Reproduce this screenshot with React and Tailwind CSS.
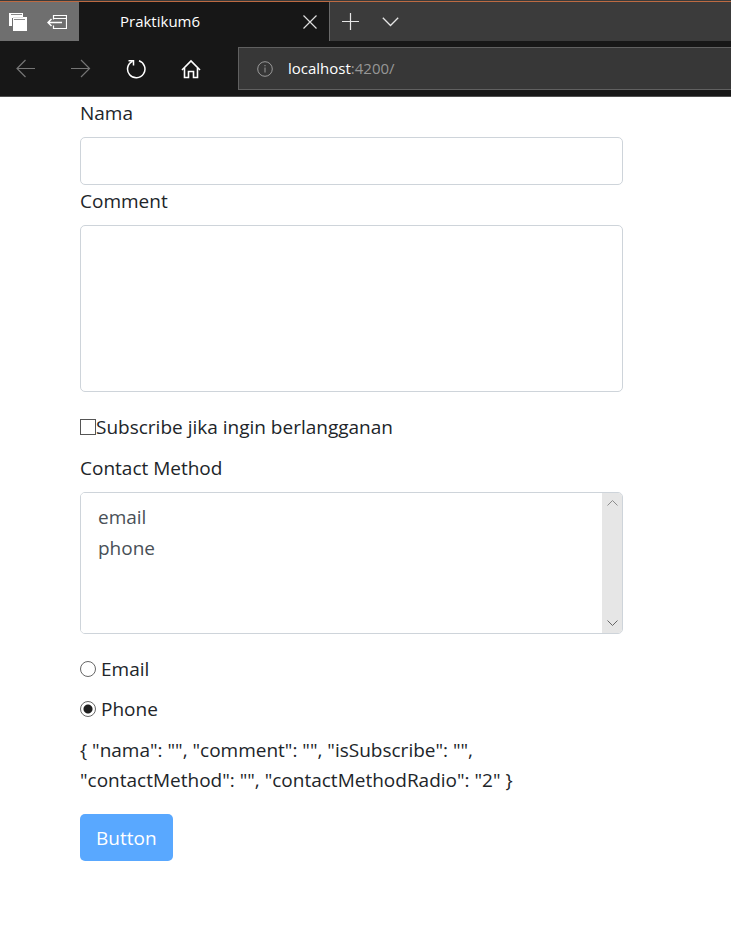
import { useState } from "react";

function TabBar() {
  return (
    <div className="flex h-[41px] border-t border-[#3b3b3b] bg-[#3b3b3b]">
      <div className="flex flex-1 border-t border-[#bd6a42]">
        <div className="flex w-[79px] bg-[#6f6f6f] text-white">
          <button type="button" aria-label="Tabs you've set aside" className="flex w-9 items-center justify-center">
            <svg width="18" height="18" viewBox="0 0 18 18" shapeRendering="crispEdges">
              <path d="M0 0h14v13H0z" fill="#fff" />
              <path d="M2 1h11v1H2z" fill="#8a8a8a" />
              <path d="M4 4h14v14H4z" fill="#fff" />
              <path d="M4 4h10v1H4z" fill="#e4e4e4" />
              <path d="M14 0h1v4h-1zM3 5h1v8H3z" fill="#6f6f6f" />
              <path d="M5 6h11v1H5z" fill="#8a8a8a" />
            </svg>
          </button>
          <button type="button" aria-label="Set these tabs aside" className="flex w-11 items-center justify-center">
            <svg width="20" height="14" viewBox="0 0 20 14" fill="none" stroke="#fff">
              <path d="M6.5 4.5v-4h13v13h-13v-3M6.5 3.5h13" strokeWidth="1.2" />
              <path d="M1 7.5h14M4.5 4 1 7.5 4.5 11" strokeWidth="1.5" />
            </svg>
          </button>
        </div>
        <div className="flex w-[251px] items-center justify-between border-r border-[#6a6a6a] bg-[#171717] pr-3 pl-[41px] text-[15px] text-white">
          <span>Praktikum6</span>
          <button type="button" aria-label="Close tab">
            <svg width="14" height="14" viewBox="0 0 14 14" fill="none" stroke="#dedede" strokeWidth="1.2">
              <path d="m.5.5 13 13M13.5.5l-13 13" />
            </svg>
          </button>
        </div>
        <button type="button" aria-label="New tab" className="flex w-10 items-center justify-center">
          <svg width="17" height="17" viewBox="0 0 17 17" fill="none" stroke="#e6e6e6" strokeWidth="1.2">
            <path d="M8.5 0v17M0 8.5h17" />
          </svg>
        </button>
        <button type="button" aria-label="Show tab previews" className="flex w-10 items-center justify-center">
          <svg width="17" height="10" viewBox="0 0 17 10" fill="none" stroke="#e6e6e6" strokeWidth="1.3">
            <path d="m.8.8 7.7 7.7L16.2.8" />
          </svg>
        </button>
      </div>
    </div>
  );
}

function Toolbar() {
  return (
    <div className="flex h-14 items-center border-b border-[#4f4f4f] bg-[#171717]">
      <nav className="flex w-[238px] pr-[18px]">
        <button type="button" aria-label="Back" className="flex w-[52px] justify-center">
          <svg width="20" height="20" viewBox="0 0 20 20" fill="none" stroke="#757575" strokeWidth="1.2">
            <path d="M19 9.5H1M9.5 1 1 9.5 9.5 18" />
          </svg>
        </button>
        <button type="button" aria-label="Forward" className="flex w-[58px] justify-center">
          <svg width="20" height="20" viewBox="0 0 20 20" fill="none" stroke="#757575" strokeWidth="1.2">
            <path d="M0 9.5h18.5M10 1l8.500 8.500L10 18" />
          </svg>
        </button>
        <button type="button" aria-label="Refresh" className="flex w-[52px] justify-center">
          <svg width="20" height="20" viewBox="0 0 20 20" fill="none" stroke="#fff" strokeWidth="1.5">
            <path d="M13 1.800A8.700 8.700 0 1 1 6.500 2.200" />
            <path d="M2.500 1.700h5v4.800" />
          </svg>
        </button>
        <button type="button" aria-label="Home" className="flex w-[58px] justify-center">
          <svg width="20" height="20" viewBox="0 0 20 20" fill="none" stroke="#fff" strokeWidth="1.6">
            <path d="m1 11 9-9 9 9" />
            <path d="M3.5 9v9.5h4v-6h5v6h4V9" />
          </svg>
        </button>
      </nav>
      <div className="flex h-[43px] flex-1 items-center border border-r-0 border-[#606060] bg-[#373737] pl-[18px] text-[15px]">
        <svg width="16" height="16" viewBox="0 0 16 16" fill="none" stroke="#9a9a9a">
          <circle cx="8" cy="8" r="7.3" />
          <path d="M8 6.5v5M8 4v1.3" />
        </svg>
        <span className="ml-[15px] text-[#969696]">
          <span className="text-white">localhost</span>:4200/
        </span>
      </div>
    </div>
  );
}

function Radio({ id, value, label, checked, onChange }) {
  return (
    <div className="mb-[10px] flex items-center gap-[5px]">
      <input
        type="radio"
        id={id}
        name="contactMethodRadio"
        value={value}
        checked={checked}
        onChange={() => onChange(value)}
        className="size-4 appearance-none rounded-full border border-[#666] bg-white checked:bg-[radial-gradient(circle,#1f1f1f_4px,#fff_5px)]"
      />
      <label htmlFor={id}>{label}</label>
    </div>
  );
}

export default function App() {
  const [radio, setRadio] = useState("2");

  return (
    <div className="min-h-screen bg-white font-['Open_Sans','Noto_Sans',sans-serif]">
      <header>
        <TabBar />
        <Toolbar />
      </header>
      <form className="pr-[108px] pl-20 text-[19px] leading-[30px] text-[#212529]">
        <label htmlFor="nama" className="block pt-px pb-[9px]">Nama</label>
        <input id="nama" type="text" className="block h-12 w-full rounded-[5px] border border-[#ced4da] px-4" />

        <label htmlFor="comment" className="block pt-px pb-[9px]">Comment</label>
        <textarea id="comment" className="mb-5 block h-[167px] w-full resize-none rounded-[5px] border border-[#ced4da] px-4 py-2" />

        <div className="mb-[10px] flex items-center">
          <input id="subscribe" type="checkbox" className="size-4 appearance-none border border-[#555] bg-white checked:bg-[#555]" />
          <label htmlFor="subscribe">Subscribe jika ingin berlangganan</label>
        </div>

        <label htmlFor="contactMethod" className="block pt-px pb-[9px]">Contact Method</label>
        <div className="mb-5 flex h-[142px] overflow-hidden rounded-[5px] border border-[#ced4da]">
          <select
            id="contactMethod"
            size={4}
            className="min-w-0 flex-1 appearance-none overflow-hidden bg-white px-[15px] py-[11px] text-[#495057] outline-none"
          >
            <option className="min-h-[31px] px-[2px] leading-[31px]">email</option>
            <option className="min-h-[31px] px-[2px] leading-[31px]">phone</option>
          </select>
          <div className="flex w-5 flex-col items-center justify-between bg-[#e6e6e6] py-[7px]">
            <svg width="11" height="6" viewBox="0 0 11 6" fill="none" stroke="#8c8c8c">
              <path d="m.5 5.5 5-5 5 5" />
            </svg>
            <svg width="11" height="6" viewBox="0 0 11 6" fill="none" stroke="#666">
              <path d="m.5.5 5 5 5-5" />
            </svg>
          </div>
        </div>

        <Radio id="radioEmail" value="1" label="Email" checked={radio === "1"} onChange={setRadio} />
        <Radio id="radioPhone" value="2" label="Phone" checked={radio === "2"} onChange={setRadio} />

        <p className="max-w-[450px] pt-px pb-[19px]">
          {`{ "nama": "", "comment": "", "isSubscribe": "", "contactMethod": "", "contactMethodRadio": "${radio}" }`}
        </p>
        <button type="button" className="h-[47px] rounded-[5px] bg-[#59a8ff] px-4 text-white">Button</button>
      </form>
    </div>
  );
}
